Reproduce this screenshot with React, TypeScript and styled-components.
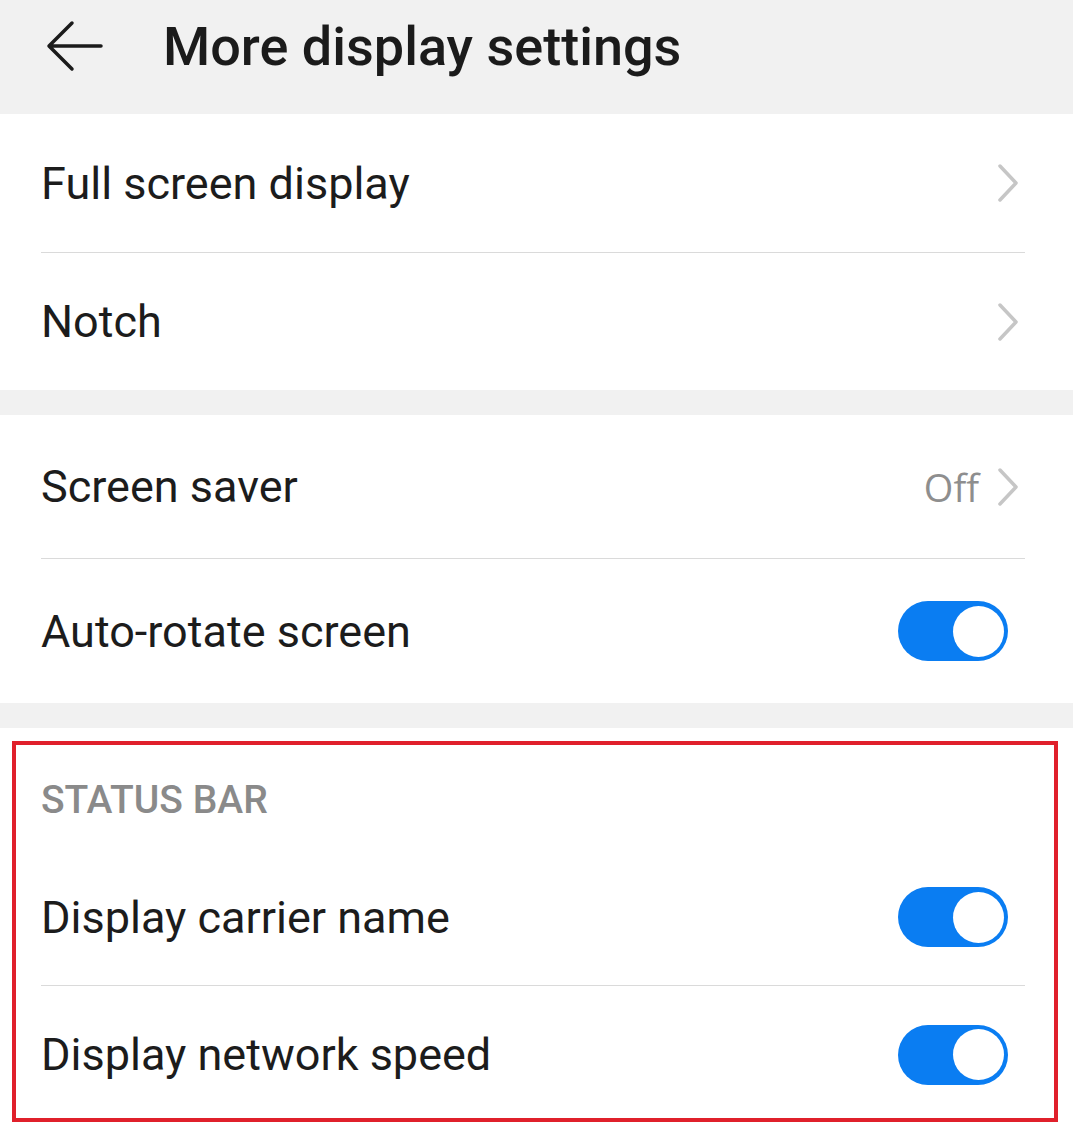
import styled, { createGlobalStyle } from "styled-components";

const GlobalStyle = createGlobalStyle`
  body {
    margin: 0;
    background: #ffffff;
    font-family: Roboto, "Noto Sans", sans-serif;
  }
`;

const Page = styled.div`
  width: 1073px;
  background: #f1f1f1;
`;

const Header = styled.div`
  height: 114px;
  display: flex;
  align-items: center;
  padding-left: 46px;
  padding-bottom: 22px;
  box-sizing: border-box;
`;

const BackButton = styled.div`
  width: 60px;
  height: 54px;
  display: flex;
  align-items: center;
  margin-right: 57px;
`;

const Title = styled.h1`
  margin: 0;
  font-size: 54px;
  font-weight: 500;
  color: #1b1b1b;
`;

const Section = styled.div<{ $gap?: boolean }>`
  position: relative;
  background: #ffffff;
  margin-top: ${(p) => (p.$gap ? "25px" : "0")};
`;

const Row = styled.div<{ $height: number; $last?: boolean }>`
  height: ${(p) => p.$height}px;
  margin: 0 48px 0 41px;
  display: flex;
  align-items: center;
  justify-content: space-between;
  border-bottom: ${(p) => (p.$last ? "none" : "1px solid #dadada")};
  box-sizing: border-box;
`;

const Label = styled.span`
  font-size: 45px;
  color: #1c1c1c;
`;

const Trail = styled.div<{ $pad: number }>`
  display: flex;
  align-items: center;
  gap: 18px;
  padding-right: ${(p) => p.$pad}px;
`;

const Value = styled.span`
  font-family: "Open Sans", "Noto Sans", sans-serif;
  font-size: 38px;
  color: #8e8e8e;
`;

const SubHeader = styled.div`
  height: 121px;
  padding: 49px 0 0 41px;
  box-sizing: border-box;
  font-size: 39px;
  font-weight: 500;
  color: #8a8a8a;
`;

const Toggle = styled.div<{ $on: boolean }>`
  width: 110px;
  height: 60px;
  border-radius: 30px;
  background: ${(p) => (p.$on ? "#0a7df2" : "#cccccc")};
  position: relative;
`;

const Knob = styled.div<{ $on: boolean }>`
  position: absolute;
  top: 4.5px;
  left: ${(p) => (p.$on ? "54.5px" : "4.5px")};
  width: 51px;
  height: 51px;
  border-radius: 50%;
  background: #ffffff;
`;

const Highlight = styled.div`
  position: absolute;
  left: 12px;
  top: 13px;
  width: 1046px;
  height: 381px;
  border: 4px solid #e0202b;
  box-sizing: border-box;
  pointer-events: none;
`;

const Bottom = styled.div`
  height: 25px;
  background: #ffffff;
`;

function Chevron() {
  return (
    <svg width="22" height="38" viewBox="0 0 22 38">
      <path
        d="M3 2 L19 19 L3 36"
        fill="none"
        stroke="#c6c6c6"
        strokeWidth="3.5"
        strokeLinecap="round"
        strokeLinejoin="round"
      />
    </svg>
  );
}

function Switch({ on }: { on: boolean }) {
  return (
    <Toggle $on={on}>
      <Knob $on={on} />
    </Toggle>
  );
}

function App() {
  return (
    <>
      <GlobalStyle />
      <Page>
        <Header>
          <BackButton>
            <svg width="58" height="52" viewBox="0 0 58 52">
              <path
                d="M55 26 H4 M26 3 L3 26 L26 49"
                fill="none"
                stroke="#1b1b1b"
                strokeWidth="3.5"
                strokeLinecap="round"
                strokeLinejoin="round"
              />
            </svg>
          </BackButton>
          <Title>More display settings</Title>
        </Header>
        <Section>
          <Row $height={139}>
            <Label>Full screen display</Label>
            <Trail $pad={6}>
              <Chevron />
            </Trail>
          </Row>
          <Row $height={137} $last>
            <Label>Notch</Label>
            <Trail $pad={6}>
              <Chevron />
            </Trail>
          </Row>
        </Section>
        <Section $gap>
          <Row $height={144}>
            <Label>Screen saver</Label>
            <Trail $pad={6}>
              <Value>Off</Value>
              <Chevron />
            </Trail>
          </Row>
          <Row $height={144} $last>
            <Label>Auto-rotate screen</Label>
            <Trail $pad={17}>
              <Switch on />
            </Trail>
          </Row>
        </Section>
        <Section $gap>
          <SubHeader>STATUS BAR</SubHeader>
          <Row $height={137}>
            <Label>Display carrier name</Label>
            <Trail $pad={17}>
              <Switch on />
            </Trail>
          </Row>
          <Row $height={137} $last>
            <Label>Display network speed</Label>
            <Trail $pad={17}>
              <Switch on />
            </Trail>
          </Row>
          <Bottom />
          <Highlight />
        </Section>
      </Page>
    </>
  );
}

export default App;
